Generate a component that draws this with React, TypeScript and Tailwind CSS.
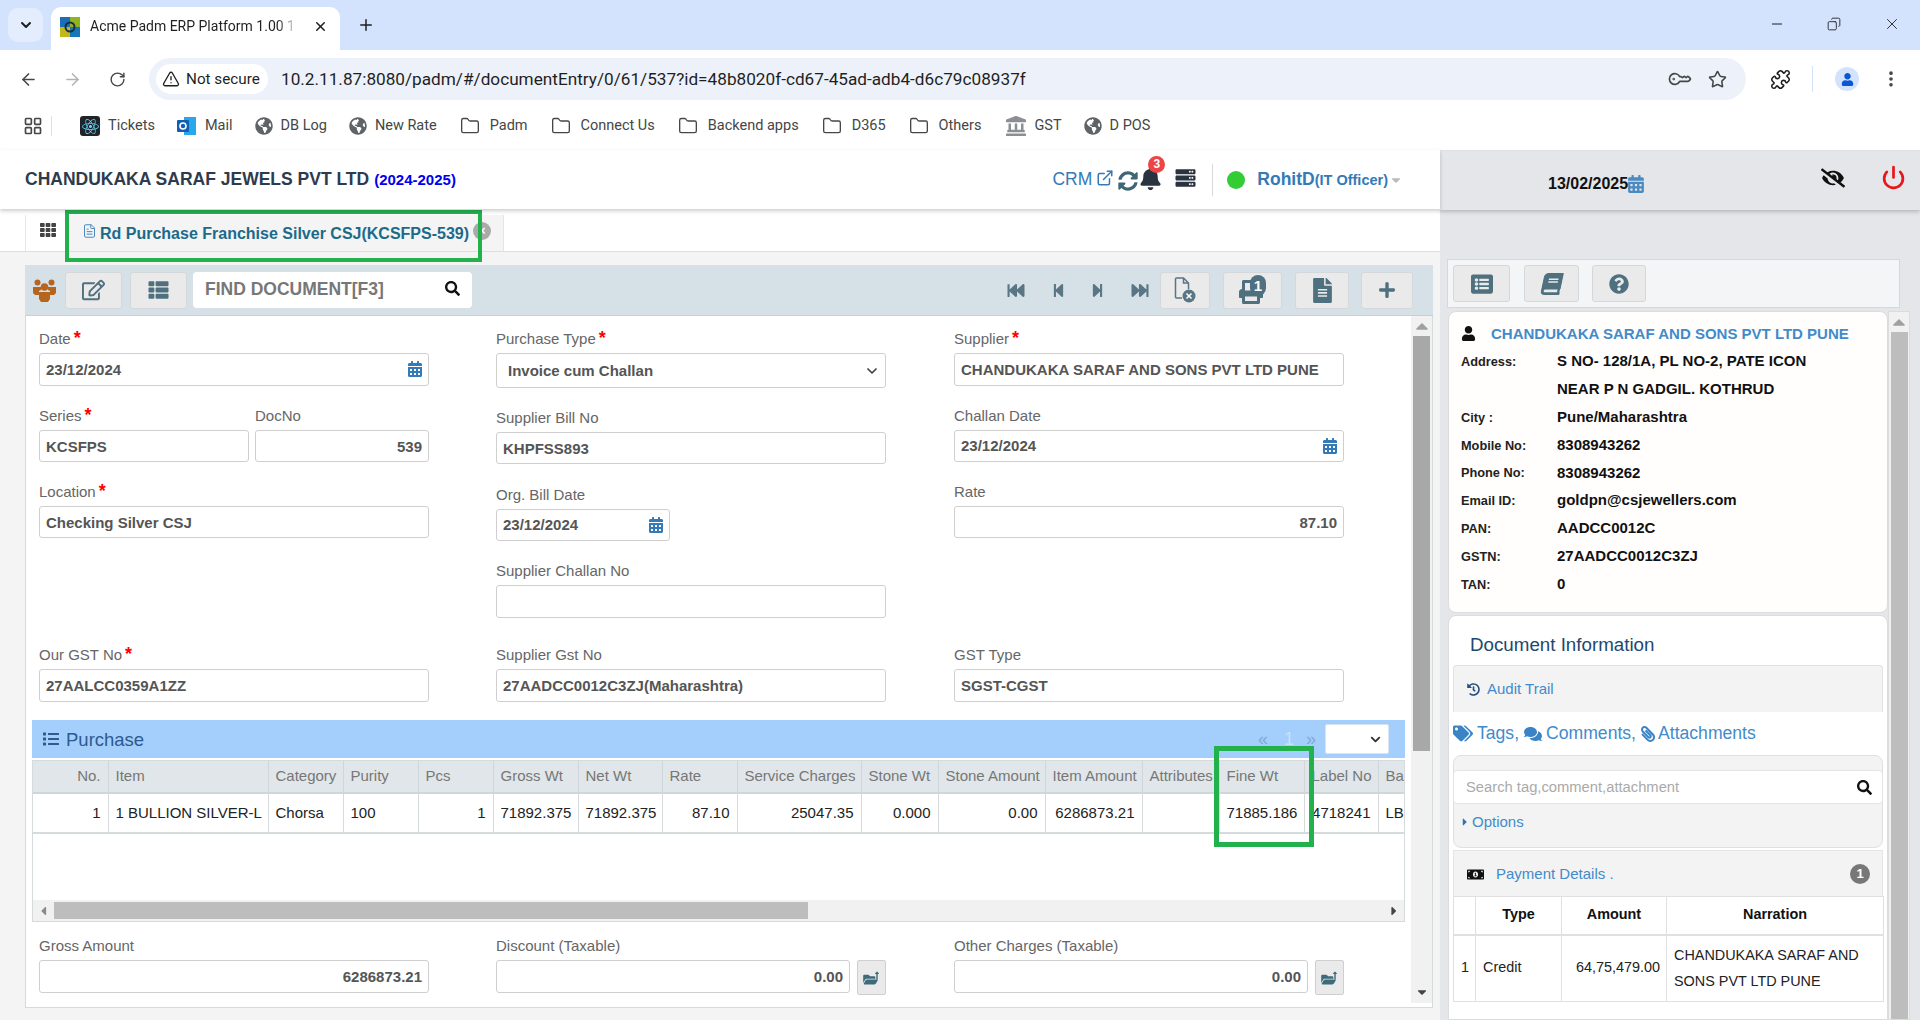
import React from "react";
import { ArrowLeft, ArrowRight, RotateCw, TriangleAlert, KeyRound, Star, Puzzle, MoreVertical, LayoutGrid, Folder, Minus, X, Plus, ChevronDown, ExternalLink, Power, FileText, Copy } from "lucide-react";
import { FaGlobeAmericas, FaReact, FaSyncAlt, FaBell, FaServer, FaTh, FaRegEdit, FaThList, FaSearch, FaFastBackward, FaStepBackward, FaStepForward, FaFastForward, FaPrint, FaFileAlt, FaPlus, FaCalendarAlt, FaList, FaFolderOpen, FaListAlt, FaBook, FaQuestionCircle, FaUser, FaHistory, FaTags, FaComments, FaPaperclip, FaMoneyBillAlt, FaCaretRight, FaCaretDown, FaEyeSlash, FaLandmark, FaCaretUp, FaCaretLeft, FaLongArrowAltUp } from "react-icons/fa";

const chromeFont = "font-['Roboto',sans-serif]";

function Bookmark({ icon, label }: { icon: React.ReactNode; label: string }) {
  return (
    <div className="flex items-center gap-[8px] text-[14.5px] text-[#444746]">
      {icon}
      <span className="whitespace-nowrap">{label}</span>
    </div>
  );
}
const Globe = () => <FaGlobeAmericas className="w-[18px] h-[18px] text-[#5f6368]" />;
const Fold = () => <Folder className="ml-[1px] mr-[2px] w-[20px] h-[20px] text-[#444746]" strokeWidth={1.6} />;

function BrowserChrome() {
  return (
    <div className={`${chromeFont} shrink-0`}>
      <div className="h-[50px] bg-[#d3e3fd] flex items-end pl-[8px]">
        <div className="w-[35px] h-[34px] mb-[8px] rounded-[10px] bg-[#e3edfd] flex items-center justify-center">
          <ChevronDown className="w-[16px] h-[16px] text-[#1f1f1f]" strokeWidth={3} />
        </div>
        <div className="ml-[8px] w-[289px] h-[43px] bg-white rounded-t-[10px] flex items-center pl-[9px] pb-[4px]">
          <svg width="20" height="20" viewBox="0 0 20 20" className="shrink-0">
            <rect width="10" height="10" fill="#1a6fb5" />
            <rect x="10" width="10" height="10" fill="#8db51d" />
            <rect y="10" width="10" height="10" fill="#c2b81a" />
            <rect x="10" y="10" width="10" height="10" fill="#1577b8" />
            <circle cx="10" cy="10" r="4.5" fill="none" stroke="#1f2a44" strokeWidth="2" />
          </svg>
          <div className="ml-[10px] w-[208px] overflow-hidden whitespace-nowrap text-[14px] text-[#1f1f1f] [mask-image:linear-gradient(to_right,black_90%,transparent)]">Acme Padm ERP Platform 1.00 1</div>
          <X className="ml-[15px] w-[15px] h-[15px] text-[#1f1f1f]" strokeWidth={2.4} />
        </div>
        <Plus className="ml-[17px] mb-[16px] w-[18px] h-[18px] text-[#1f1f1f]" strokeWidth={2} />
        <div className="ml-auto flex items-center mb-[17px] pr-[19px] gap-[42px] text-[#1f1f1f]">
          <Minus className="w-[16px] h-[16px]" strokeWidth={1.5} />
          <Copy className="w-[14px] h-[14px] -scale-x-100" strokeWidth={1.5} />
          <X className="w-[18px] h-[18px]" strokeWidth={1.2} />
        </div>
      </div>
      <div className="h-[50px] bg-white rounded-t-[8px] flex items-center pt-[8px] pl-[19px] text-[#444746]">
        <ArrowLeft className="w-[19px] h-[19px]" strokeWidth={2} />
        <ArrowRight className="ml-[25px] w-[19px] h-[19px] text-[#b0b3b8]" strokeWidth={2} />
        <RotateCw className="ml-[27px] w-[17px] h-[17px]" strokeWidth={2} />
        <div className="ml-[23px] w-[1597px] h-[42px] rounded-full bg-[#edf2fa] flex items-center pl-[7px]">
          <div className="w-[112px] h-[30px] bg-white rounded-full flex items-center pl-[6px] gap-[6px] text-[15.25px] text-[#1f1f1f]">
            <TriangleAlert className="w-[18px] h-[18px] shrink-0" strokeWidth={1.8} />
            <span className="whitespace-nowrap">Not secure</span>
          </div>
          <div className="ml-[13px] mt-[2px] text-[17.2px] text-[#1f1f1f] whitespace-nowrap">10.2.11.87:8080/padm/#/documentEntry/0/61/537?id=48b8020f-cd67-45ad-adb4-d6c79c08937f</div>
          <KeyRound className="ml-auto w-[20px] h-[20px] rotate-[-135deg]" strokeWidth={2} />
          <Star className="ml-[19px] mr-[19px] w-[19px] h-[19px]" strokeWidth={2} />
        </div>
        <Puzzle className="ml-[24px] w-[21px] h-[21px] text-[#1f1f1f]" strokeWidth={1.8} />
        <div className="ml-[21px] w-px h-[26px] bg-[#d3e3fd]" />
        <div className="ml-[22px] w-[24px] h-[24px] rounded-full bg-[#d3e3fd] flex items-center justify-center">
          <FaUser className="w-[13px] h-[13px] text-[#0b57d0]" />
        </div>
        <MoreVertical className="ml-[22px] w-[20px] h-[20px]" strokeWidth={2.4} />
      </div>
      <div className="h-[50px] bg-white flex items-center pt-[2px] pl-[23px]">
        <LayoutGrid className="w-[20px] h-[20px] text-[#444746]" strokeWidth={2} />
        <div className="ml-[8px] w-px h-[20px] bg-[#d3e3fd]" />
        <div className="ml-[28px] flex items-center gap-[22px]">
          <Bookmark label="Tickets" icon={<span className="w-[20px] h-[20px] bg-[#20232a] rounded-[3px] flex items-center justify-center"><FaReact className="w-[17px] h-[17px] text-[#61dafb]" /></span>} />
          <Bookmark label="Mail" icon={<svg width="20" height="20" viewBox="0 0 20 20"><rect x="7" y="1" width="12" height="18" fill="#28a8ea" /><rect x="0" y="4" width="12" height="12" rx="1" fill="#0f5fb4" /><circle cx="6" cy="10" r="3" fill="none" stroke="#fff" strokeWidth="1.6" /></svg>} />
          <Bookmark label="DB Log" icon={<Globe />} />
          <Bookmark label="New Rate" icon={<Globe />} />
          <Bookmark label="Padm" icon={<Fold />} />
          <Bookmark label="Connect Us" icon={<Fold />} />
          <Bookmark label="Backend apps" icon={<Fold />} />
          <Bookmark label="D365" icon={<Fold />} />
          <Bookmark label="Others" icon={<Fold />} />
          <Bookmark label="GST" icon={<FaLandmark className="ml-[3px] w-[20px] h-[20px] text-[#8b8f94]" />} />
          <Bookmark label="D POS" icon={<Globe />} />
        </div>
      </div>
    </div>
  );
}

function Label({ text, req }: { text: string; req?: boolean }) {
  return (
    <div className="h-[20px] mb-[4px] text-[15px] leading-[20px] text-[#666] whitespace-nowrap">
      {text}
      {req && <span className="text-[#ff0000] text-[18px] leading-[14px] ml-[3px] font-bold">*</span>}
    </div>
  );
}

function Box({ value, h, right, cal, cls }: { value?: string; h: string; right?: boolean; cal?: boolean; cls?: string }) {
  const pad = h === "h-[32px]" && !cal ? "pt-[3px]" : "pt-[1px]";
  return (
    <div className={`${h} ${cls ?? "w-full"} ${pad} border border-[#cfcfcf] rounded-[3px] bg-white flex items-center px-[6px] text-[15px] font-bold text-[#555] whitespace-nowrap ${right ? "justify-end" : ""}`}>
      {value}
      {cal && <FaCalendarAlt className="ml-auto -mt-[2px] w-[14px] h-[16px] text-[#337ab7]" />}
    </div>
  );
}

function Field({ label, req, value, h, right, cal, mt, cls }: { label: string; req?: boolean; value?: string; h: string; right?: boolean; cal?: boolean; mt?: string; cls?: string }) {
  return (
    <div className={mt ?? ""}>
      <Label text={label} req={req} />
      <Box value={value} h={h} right={right} cal={cal} cls={cls} />
    </div>
  );
}

const widths = [75, 160, 75, 75, 75, 85, 84, 75, 124, 77, 107, 97, 77, 85, 74, 100];
const heads = ["No.", "Item", "Category", "Purity", "Pcs", "Gross Wt", "Net Wt", "Rate", "Service Charges", "Stone Wt", "Stone Amount", "Item Amount", "Attributes", "Fine Wt", "Label No", "Ba"];
const cells: [string, boolean][] = [["1", true], ["1 BULLION SILVER-L", false], ["Chorsa", false], ["100", false], ["1", true], ["71892.375", false], ["71892.375", false], ["87.10", true], ["25047.35", true], ["0.000", true], ["0.00", true], ["6286873.21", true], ["", false], ["71885.186", false], ["4718241", true], ["LB", false]];

function GridTable() {
  return (
    <div className="w-[1373px] h-[162px] border border-[#d5dadc] bg-white flex flex-col overflow-hidden">
      <div className="h-[140px] overflow-hidden">
        <table className="table-fixed w-[1445px] border-collapse text-[15px]">
          <colgroup>{widths.map((w, i) => <col key={i} style={{ width: w }} />)}</colgroup>
          <thead>
            <tr className="h-[32px] bg-[#e0e6e9]">
              {heads.map((h, i) => (
                <th key={i} className={`font-normal text-[#777] whitespace-nowrap border-r border-b-2 border-[#d0d7da] ${i === 0 ? "text-right pr-[7px]" : "text-left pl-[7px]"}`}>{h}</th>
              ))}
            </tr>
          </thead>
          <tbody>
            <tr className="h-[40px]">
              {cells.map(([c, r], i) => (
                <td key={i} className={`text-[#222] whitespace-nowrap border-r border-b-2 border-[#d5dadc] ${r ? "text-right pr-[7px]" : "text-left pl-[7px]"}`}>{c}</td>
              ))}
            </tr>
          </tbody>
        </table>
      </div>
      <div className="h-[21px] bg-[#f1f1f1] flex items-center">
        <FaCaretLeft className="w-[21px] h-[14px] text-[#8a8a8a]" />
        <div className="w-[754px] h-[17px] bg-[#bdbdbd]" />
        <FaCaretRight className="ml-auto mr-[2px] w-[16px] h-[14px] text-[#444]" />
      </div>
    </div>
  );
}

const btn = "h-[37px] bg-[#eaeaea] border border-[#d4d8da] rounded-[3px] flex items-center justify-center text-[#4f707f]";

function UploadBtn() {
  return (
    <div className="relative w-[29px] h-[35px] bg-[#eaeaea] border border-[#cfcfcf] rounded-[2px] flex items-center justify-center shrink-0">
      <FaFolderOpen className="w-[15px] h-[13px] mt-[4px] -ml-[2px] text-[#3f6a7a]" />
      <FaLongArrowAltUp className="absolute right-[5px] top-[10px] w-[6px] h-[9px] text-[#3f6a7a]" />
    </div>
  );
}

function Users() {
  return (
    <svg width="23" height="23" viewBox="0 0 23 23" fill="#b5651d" className="shrink-0">
      <circle cx="4.5" cy="3.5" r="3" />
      <circle cx="18.5" cy="3.5" r="3" />
      <path d="M0 8h8v3l-2 1v4H2l-2-2zM15 8h8v6l-2 2h-4v-4l-2-1z" />
      <circle cx="11.5" cy="8" r="3.8" />
      <path d="M6 13h11v7l-2 3H8l-2-3z" />
    </svg>
  );
}

function MainPanel() {
  return (
    <div className="ml-[25px] mt-[13px] w-[1408px]">
      <div className="h-[51px] bg-[#d6e1e7] border-b border-[#c5d0d6] flex items-center pl-[8px] pr-[20px]">
        <Users />
        <div className={`${btn} ml-[9px] w-[57px]`}><FaRegEdit className="w-[23px] h-[22px]" /></div>
        <div className={`${btn} ml-[8px] w-[57px]`}><FaThList className="w-[23px] h-[20px]" /></div>
        <div className="ml-[6px] w-[279px] h-[36px] bg-white rounded-[4px] flex items-center pl-[12px] pr-[12px] pb-[1px] text-[17.5px] font-bold text-[#777] whitespace-nowrap">
          FIND DOCUMENT[F3]
          <FaSearch className="ml-auto -mt-[2px] w-[15px] h-[15px] text-[#111]" />
        </div>
        <div className="ml-auto flex items-center text-[#5a7684]">
          <FaFastBackward className="w-[20px] h-[17px]" />
          <FaStepBackward className="ml-[26px] w-[13px] h-[17px]" />
          <FaStepForward className="ml-[26px] w-[13px] h-[17px]" />
          <FaFastForward className="ml-[26px] w-[20px] h-[17px]" />
          <div className={`${btn} ml-[10px] w-[50px]`}>
            <svg width="24" height="28" viewBox="0 0 24 28" fill="none" stroke="#5a7684" strokeWidth="1.5">
              <path d="M9 22H3.5a1 1 0 0 1-1-1V3a1 1 0 0 1 1-1h7l5 5v6" />
              <path d="M10.5 2v5h5" />
              <circle cx="16" cy="20" r="6.5" fill="#5a7684" stroke="none" />
              <path d="M13.5 17.5l5 5M18.5 17.5l-5 5" stroke="#fff" />
            </svg>
          </div>
          <div className={`${btn} ml-[13px] w-[59px] relative`}>
            <FaPrint className="w-[24px] h-[24px] mt-[4px] -ml-[4px]" />
            <span className="absolute left-[26px] top-[2px] w-[16px] h-[21px] rounded-full bg-[#4f707f] text-white text-[15px] font-bold leading-[21px] text-center">1</span>
          </div>
          <div className={`${btn} ml-[13px] w-[54px]`}><FaFileAlt className="w-[19px] h-[25px]" /></div>
          <div className={`${btn} ml-[12px] w-[52px]`}><FaPlus className="w-[18px] h-[18px]" /></div>
        </div>
      </div>
      <div className="h-[692px] bg-white border-l border-r border-b border-[#d5dadd] flex">
        <div className="w-[1385px]">
          <div className="flex pl-[13px] pt-[13px]">
            <div className="w-[390px]">
              <Field label="Date" req value="23/12/2024" h="h-[33px]" cal />
              <div className="flex gap-[6px] mt-[20px]">
                <div className="w-[210px]"><Field label="Series" req value="KCSFPS" h="h-[32px]" /></div>
                <div className="w-[174px]"><Field label="DocNo" value="539" h="h-[32px]" right /></div>
              </div>
              <Field label="Location" req value="Checking Silver CSJ" h="h-[32px]" mt="mt-[20px]" />
              <Field label="Our GST No" req value="27AALCC0359A1ZZ" h="h-[33px]" mt="mt-[107px]" />
            </div>
            <div className="w-[390px] ml-[67px]">
              <Label text="Purchase Type" req />
              <div className="h-[35px] border border-[#cfcfcf] rounded-[3px] flex items-center pl-[11px] pr-[5px] pt-[1px] text-[15px] font-bold text-[#555]">
                Invoice cum Challan
                <ChevronDown className="ml-auto w-[16px] h-[16px] text-[#444]" strokeWidth={2.6} />
              </div>
              <Field label="Supplier Bill No" value="KHPFSS893" h="h-[32px]" mt="mt-[20px]" />
              <Field label="Org. Bill Date" value="23/12/2024" h="h-[32px]" cal mt="mt-[21px]" cls="w-[174px]" />
              <Field label="Supplier Challan No" h="h-[33px]" mt="mt-[20px]" />
              <Field label="Supplier Gst No" value="27AADCC0012C3ZJ(Maharashtra)" h="h-[33px]" mt="mt-[27px]" />
            </div>
            <div className="w-[390px] ml-[68px]">
              <Field label="Supplier" req value="CHANDUKAKA SARAF AND SONS PVT LTD PUNE" h="h-[33px]" />
              <Field label="Challan Date" value="23/12/2024" h="h-[32px]" cal mt="mt-[20px]" />
              <Field label="Rate" value="87.10" h="h-[32px]" right mt="mt-[20px]" />
              <Field label="GST Type" value="SGST-CGST" h="h-[33px]" mt="mt-[107px]" />
            </div>
          </div>
          <div className="ml-[6px] mt-[18px] w-[1373px] h-[38px] bg-[#a4cffc] flex items-center pl-[10px] pr-[16px]">
            <FaList className="w-[18px] h-[16px] text-[#2d5a8f]" />
            <span className="ml-[6px] mt-[1px] text-[18.5px] text-[#2d5a8f]">Purchase</span>
            <div className="ml-auto flex items-center">
              <span className="text-[18px] text-[#7fa9d6]">«</span>
              <span className="ml-[16px] text-[18px] text-[#c9e1fb]">1</span>
              <span className="ml-[12px] text-[18px] text-[#7fa9d6]">»</span>
              <div className="ml-[9px] w-[64px] h-[30px] bg-white border border-[#d8e4f0] rounded-[2px] flex items-center justify-end pr-[5px]">
                <ChevronDown className="w-[15px] h-[15px] text-[#333]" strokeWidth={3} />
              </div>
            </div>
          </div>
          <div className="ml-[6px] mt-[2px]"><GridTable /></div>
          <div className="flex pl-[13px] mt-[14px]">
            <div className="w-[390px]">
              <Field label="Gross Amount" value="6286873.21" h="h-[33px]" right />
            </div>
            <div className="w-[390px] ml-[67px]">
              <Label text="Discount (Taxable)" />
              <div className="flex gap-[7px]"><Box value="0.00" h="h-[33px]" right cls="w-[354px]" /><UploadBtn /></div>
            </div>
            <div className="w-[390px] ml-[68px]">
              <Label text="Other Charges (Taxable)" />
              <div className="flex gap-[7px]"><Box value="0.00" h="h-[33px]" right cls="w-[354px]" /><UploadBtn /></div>
            </div>
          </div>
        </div>
        <div className="w-[21px] ml-[1px] h-[687px] bg-[#f1f1f1] flex flex-col items-center">
          <FaCaretUp className="h-[20px] w-[14px] text-[#a0a0a0] shrink-0" />
          <div className="w-[17px] h-[415px] bg-[#a8a8a8]" />
          <FaCaretDown className="mt-auto mb-[4px] h-[14px] w-[14px] text-[#444]" />
        </div>
      </div>
    </div>
  );
}

function InfoRow({ k, v }: { k: string; v: string }) {
  return (
    <div className="flex h-[27.8px] items-center">
      <div className="w-[96px] text-[12.75px] font-bold text-[#222]">{k}</div>
      <div className="text-[15px] font-bold text-[#111] whitespace-nowrap">{v}</div>
    </div>
  );
}

function RightPanel() {
  return (
    <div className="w-[480px] h-full bg-[#e4e6e9] flex flex-col">
      <div className="h-[59px] shrink-0 mt-px bg-[#e4e6e9] shadow-[0_2px_4px_rgba(0,0,0,0.2)] flex items-center relative">
        <div className="ml-[108px] mt-[6px] flex items-center text-[16px] font-bold text-[#111]">
          13/02/2025<FaCalendarAlt className="w-[16px] h-[18px] text-[#4a8ac0]" />
        </div>
        <FaEyeSlash className="ml-[177px] -mt-[6px] w-[24px] h-[20px] text-[#111]" />
        <Power className="ml-[36px] -mt-[6px] w-[25px] h-[25px] text-[#e8161b]" strokeWidth={2.6} />
      </div>
      <div className="ml-[7px] mt-[49px] w-[453px] h-[49px] shrink-0 bg-[#f4f5f6] border border-[#d5d8da] flex items-center pl-[5px] text-[#4f707f]">
        <div className={`${btn} w-[57px]`}><FaListAlt className="w-[24px] h-[22px]" /></div>
        <div className={`${btn} ml-[14px] w-[55px]`}><FaBook className="w-[20px] h-[22px] -skew-x-12" /></div>
        <div className={`${btn} ml-[13px] w-[54px]`}><FaQuestionCircle className="w-[20px] h-[20px]" /></div>
      </div>
      <div className="flex flex-1 mt-[3px] min-h-0 overflow-hidden">
        <div className="ml-[8px] w-[440px] flex flex-col gap-[2px]">
          <div className="h-[302px] shrink-0 bg-[#fffefd] border border-[#dcdcdc] rounded-[8px] pl-[12px] pt-[8px]">
            <div className="flex h-[27.8px] items-center pt-[1px]">
              <FaUser className="w-[15px] h-[15px] text-[#111] -mt-[2px]" />
              <span className="ml-[15px] text-[15px] font-bold text-[#428bca] whitespace-nowrap">CHANDUKAKA SARAF AND SONS PVT LTD PUNE</span>
            </div>
            <InfoRow k="Address:" v="S NO- 128/1A, PL NO-2, PATE ICON" />
            <InfoRow k="" v="NEAR P N GADGIL. KOTHRUD" />
            <InfoRow k="City :" v="Pune/Maharashtra" />
            <InfoRow k="Mobile No:" v="8308943262" />
            <InfoRow k="Phone No:" v="8308943262" />
            <InfoRow k="Email ID:" v="goldpn@csjewellers.com" />
            <InfoRow k="PAN:" v="AADCC0012C" />
            <InfoRow k="GSTN:" v="27AADCC0012C3ZJ" />
            <InfoRow k="TAN:" v="0" />
          </div>
          <div className="flex-1 bg-white border border-[#dcdcdc] rounded-t-[8px] px-[4px] pt-[17px]">
            <div className="pl-[17px] h-[24px] leading-[24px] text-[18.75px] text-[#23476f]">Document Information</div>
            <div className="mt-[8px] h-[47px] bg-[#f3f3f3] border border-b-0 border-[#e2e2e2] rounded-t-[4px] flex items-center pl-[13px] text-[15px] text-[#428bca]">
              <FaHistory className="w-[13px] h-[13px] text-[#23527c]" />
              <span className="ml-[7px]">Audit Trail</span>
            </div>
            <div className="h-[43px] flex items-center text-[17.6px] text-[#428bca] whitespace-nowrap">
              <FaTags className="w-[20px] h-[17px] text-[#3a84c6]" />
              <span className="ml-[4px]">Tags,</span>
              <FaComments className="ml-[5px] w-[18px] h-[16px] text-[#3a84c6]" />
              <span className="ml-[4px]">Comments,</span>
              <FaPaperclip className="ml-[5px] w-[14px] h-[16px] text-[#3a84c6] -scale-x-100" />
              <span className="ml-[3px]">Attachments</span>
            </div>
            <div className="h-[93px] bg-[#f3f3f3] border border-[#e0e0e0] rounded-[8px] pt-[14px]">
              <div className="-mx-px h-[34px] bg-white border border-[#e4e4e4] rounded-[4px] flex items-center pl-[12px] pr-[10px] text-[14.75px] text-[#aaa] whitespace-nowrap">
                Search tag,comment,attachment
                <FaSearch className="ml-auto w-[15px] h-[15px] text-[#111]" />
              </div>
              <div className="mt-[7px] pl-[8px] flex items-center text-[15px] text-[#428bca]">
                <FaCaretRight className="w-[6px] h-[12px] text-[#2f74b5]" />
                <span className="ml-[4px]">Options</span>
              </div>
            </div>
            <div className="mt-[2px] h-[46px] bg-[#f3f3f3] border-t border-x border-[#e4e4e4] flex items-center pl-[13px] pr-[12px] pt-[1px] text-[15px] text-[#428bca]">
              <FaMoneyBillAlt className="w-[17px] h-[15px] text-[#111]" />
              <span className="ml-[12px]">Payment Details .</span>
              <span className="ml-auto w-[20px] h-[20px] rounded-full bg-[#777] text-white text-[13px] font-bold leading-[20px] text-center">1</span>
            </div>
            <table className="w-[430px] table-fixed border-collapse text-[14.4px] text-[#222]">
              <colgroup><col style={{ width: 22 }} /><col style={{ width: 86 }} /><col style={{ width: 105 }} /><col style={{ width: 217 }} /></colgroup>
              <thead>
                <tr className="h-[38px] font-bold text-[#111]">
                  <th className="border border-b-[2px] border-[#e0e0e0]"></th>
                  <th className="border border-b-[2px] border-[#e0e0e0] text-center">Type</th>
                  <th className="border border-b-[2px] border-[#e0e0e0] text-center">Amount</th>
                  <th className="border border-b-[2px] border-[#e0e0e0] text-center">Narration</th>
                </tr>
              </thead>
              <tbody>
                <tr className="h-[67px]">
                  <td className="border border-[#e0e0e0] px-[7px]">1</td>
                  <td className="border border-[#e0e0e0] px-[7px]">Credit</td>
                  <td className="border border-[#e0e0e0] pr-[6px] text-right">64,75,479.00</td>
                  <td className="border border-[#e0e0e0] px-[7px] leading-[26px]">CHANDUKAKA SARAF AND SONS PVT LTD PUNE</td>
                </tr>
              </tbody>
            </table>
          </div>
        </div>
        <div className="w-[22px] bg-[#f1f1f1] border border-[#dcdcdc] flex flex-col items-center shrink-0">
          <FaCaretUp className="h-[20px] w-[14px] text-[#a0a0a0] shrink-0" />
          <div className="w-[17px] flex-1 bg-[#bdbdbd]" />
        </div>
      </div>
    </div>
  );
}

function LeftColumn() {
  return (
    <div className="w-[1440px] h-full flex flex-col bg-[#f4f4f4]">
      <div className="h-[59px] shrink-0 bg-white shadow-[0_2px_4px_rgba(0,0,0,0.2)] relative z-10 flex items-center pl-[25px] pr-[38px]">
        <div className="text-[17.5px] font-bold text-[#2e3b4e] whitespace-nowrap">CHANDUKAKA SARAF JEWELS PVT LTD</div>
        <div className="ml-[5px] mt-[2px] text-[15px] font-bold text-[#0000ee] whitespace-nowrap">(2024-2025)</div>
        <div className="ml-auto flex items-center">
          <span className="text-[17.5px] text-[#337ab7]">CRM</span>
          <ExternalLink className="ml-[4px] -mt-[4px] w-[18px] h-[18px] text-[#337ab7]" strokeWidth={2} />
          <FaSyncAlt className="ml-[4px] mt-[3px] w-[20px] h-[20px] text-[#3f6674]" />
          <div className="relative ml-px">
            <FaBell className="w-[23px] h-[23px] text-[#2a3340] -mt-[3px]" />
            <span className="absolute left-[9px] -top-[14px] w-[17px] h-[17px] rounded-full bg-[#ef4444] text-white text-[12px] font-bold leading-[17px] text-center">3</span>
          </div>
          <FaServer className="ml-[12px] -mt-[3px] w-[23px] h-[20px] text-[#2a3340]" />
          <div className="ml-[15px] w-px h-[32px] bg-[#d8d8d8]" />
          <div className="ml-[14px] w-[18px] h-[18px] rounded-full bg-[#33cc33]" />
          <span className="ml-[12px] text-[17.5px] font-bold text-[#337ab7]">RohitD</span>
          <span className="mt-[2px] text-[14.5px] font-bold text-[#337ab7] whitespace-nowrap">(IT Officer)</span>
          <FaCaretDown className="ml-[2px] w-[12px] h-[14px] text-[#bbb]" />
        </div>
      </div>
      <div className="h-[43px] shrink-0 bg-white border-b border-[#dedede] flex items-end pl-[25px]">
        <div className="h-[36px] w-[479px] border-l border-r border-[#e6e6e6] flex items-start">
          <FaTh className="ml-[12px] mt-[7px] w-[20px] h-[16px] text-[#444]" />
          <div className="ml-[7px] h-full flex-1 bg-[#f4f4f4] flex items-start pl-[17px] pt-[7px]">
            <FileText className="w-[15px] h-[18px] text-[#4a8ac0]" strokeWidth={1.6} />
            <span className="ml-[3px] text-[16px] font-bold text-[#1c6a8a] whitespace-nowrap">Rd Purchase Franchise Silver CSJ(KCSFPS-539)</span>
            <span className="ml-[4px] w-[18px] h-[18px] rounded-full bg-[#aaa] text-white text-[12px] font-bold leading-[18px] text-center shrink-0">×</span>
          </div>
        </div>
      </div>
      <MainPanel />
    </div>
  );
}

export default function App() {
  return (
    <div className="relative w-[1920px] h-[1020px] overflow-hidden flex flex-col bg-white font-['Liberation_Sans',Arial,sans-serif]">
      <BrowserChrome />
      <div className="flex flex-1 min-h-0">
        <LeftColumn />
        <RightPanel />
      </div>
      <div className="absolute left-[65px] top-[210px] w-[417px] h-[52px] border-[4px] border-[#22b14c] pointer-events-none" />
      <div className="absolute left-[1214px] top-[746px] w-[100px] h-[101px] border-[5px] border-[#22b14c] pointer-events-none" />
    </div>
  );
}
